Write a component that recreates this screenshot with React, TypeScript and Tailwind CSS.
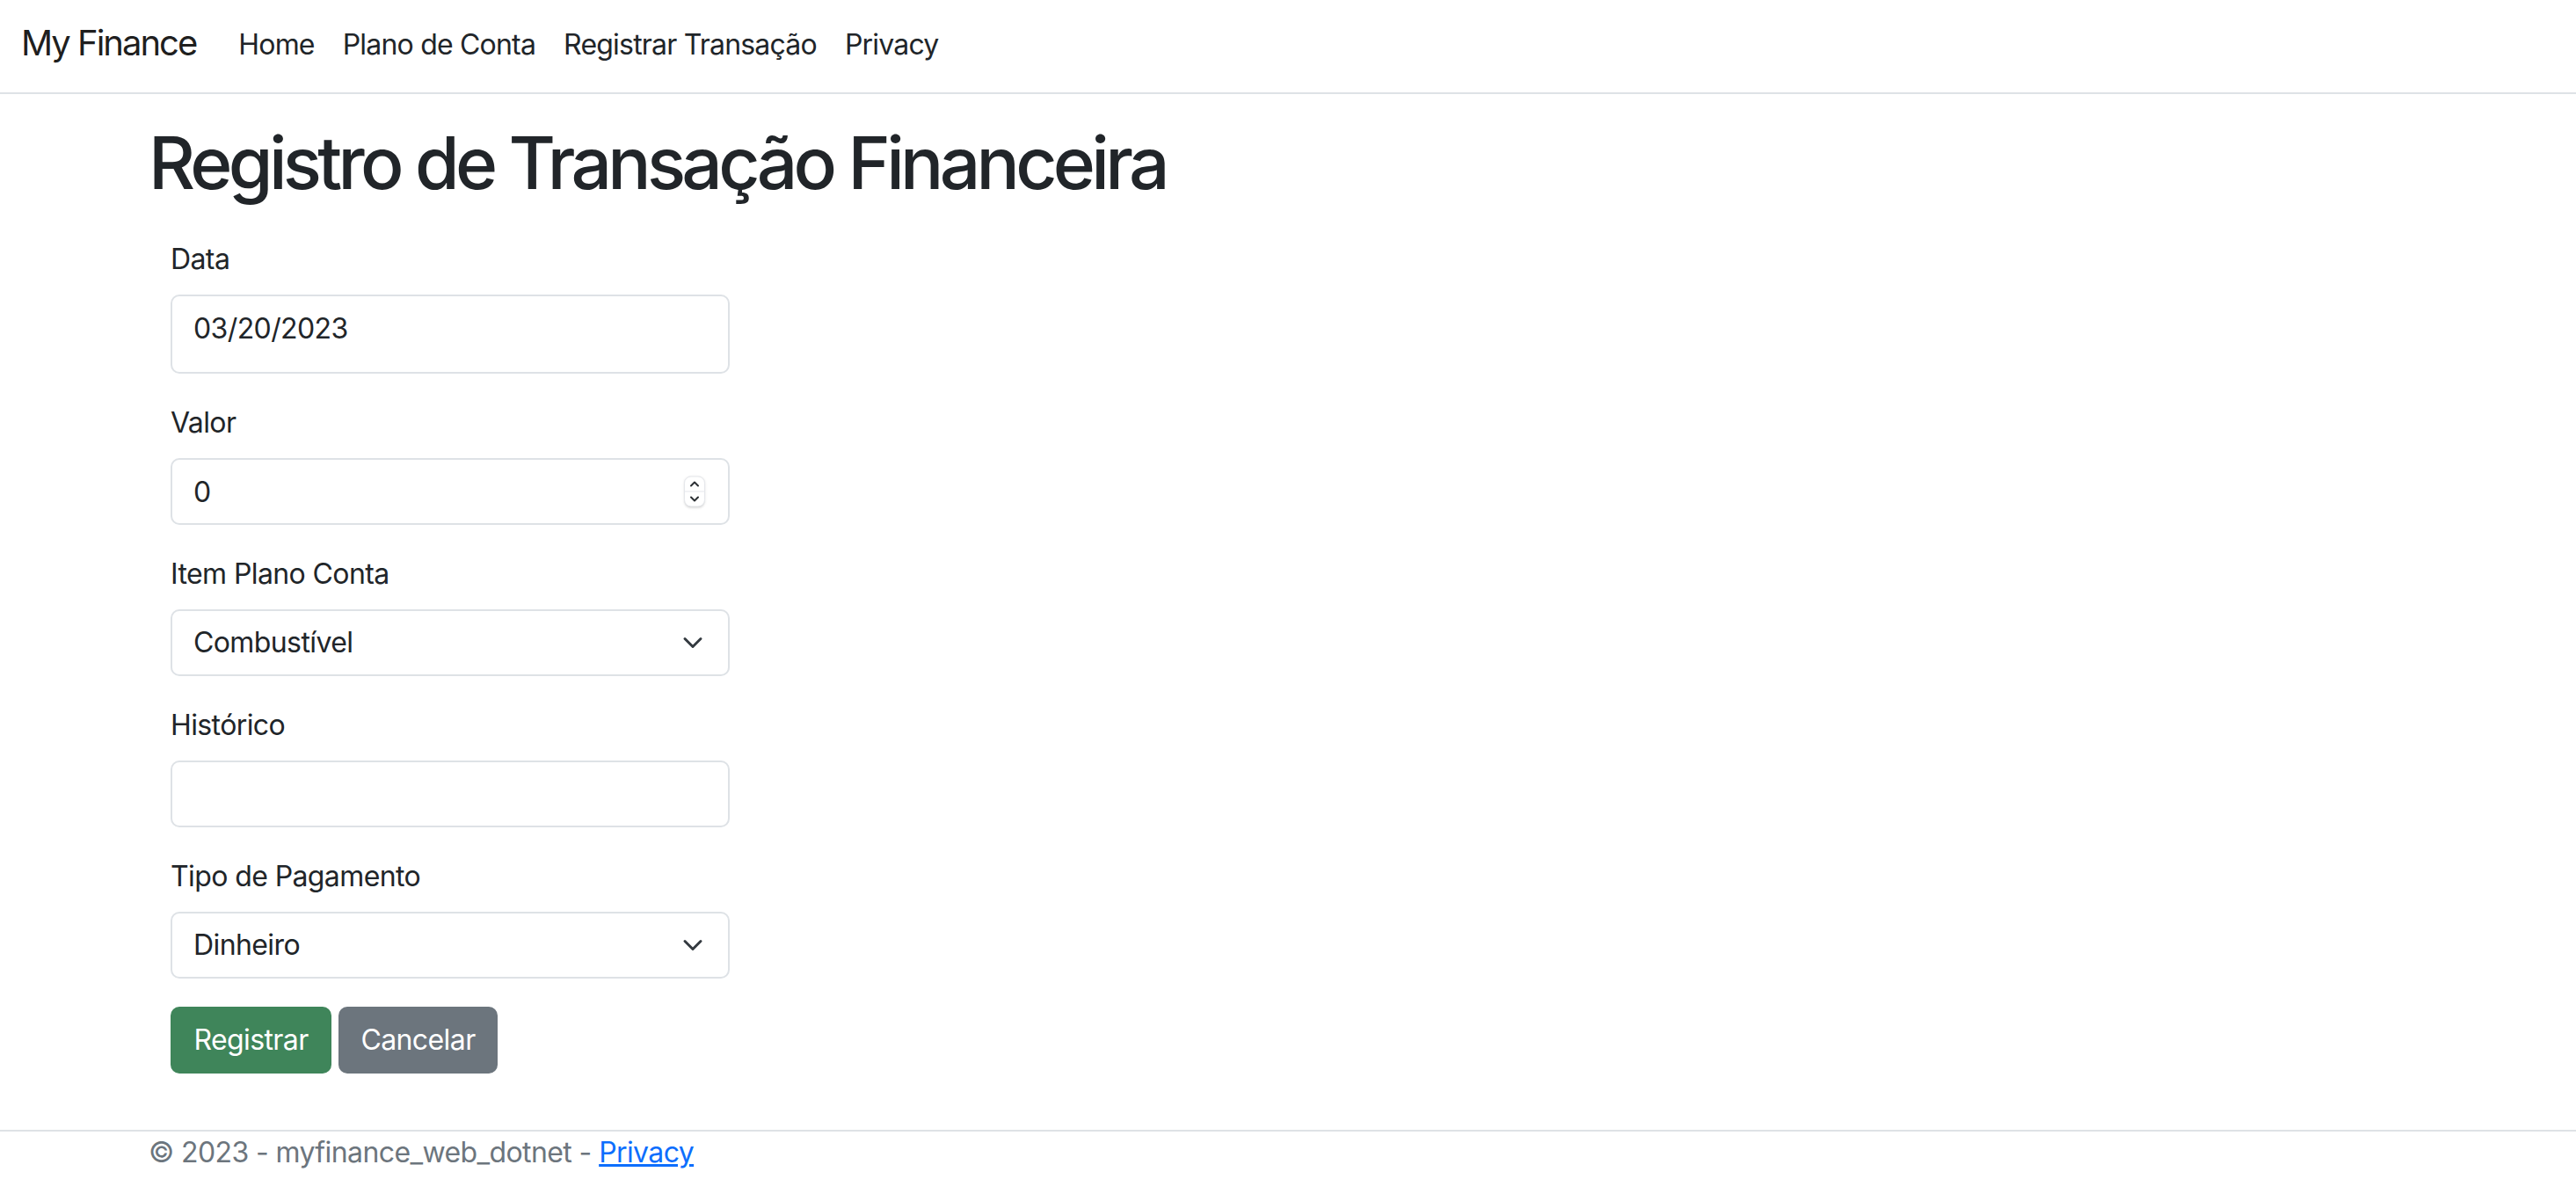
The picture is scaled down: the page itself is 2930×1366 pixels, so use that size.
import { useState } from 'react';

const FONT = { fontFamily: 'Inter, "Noto Sans", "Liberation Sans", sans-serif' };

const navLinks = ['Home', 'Plano de Conta', 'Registrar Transação', 'Privacy'];

function Chevron() {
  return (
    <svg className="pointer-events-none absolute right-[30px] top-1/2 h-[24px] w-[24px] -translate-y-1/2" viewBox="0 0 16 16" fill="none">
      <path d="m2 5 6 6 6-6" stroke="#343a40" strokeWidth="2" strokeLinecap="round" strokeLinejoin="round" />
    </svg>
  );
}

function Spinner() {
  return (
    <div className="pointer-events-none absolute right-[28px] top-1/2 flex h-[35px] w-[24px] -translate-y-1/2 flex-col overflow-hidden rounded-[8px] border border-[#e5e7eb] bg-white shadow-sm">
      <div className="flex flex-1 items-center justify-center border-b border-[#e5e7eb]">
        <svg width="12" height="8" viewBox="0 0 12 8" fill="none">
          <path d="M2 6 6 2l4 4" stroke="#2b2f33" strokeWidth="2" strokeLinecap="round" strokeLinejoin="round" />
        </svg>
      </div>
      <div className="flex flex-1 items-center justify-center">
        <svg width="12" height="8" viewBox="0 0 12 8" fill="none">
          <path d="M2 2l4 4 4-4" stroke="#2b2f33" strokeWidth="2" strokeLinecap="round" strokeLinejoin="round" />
        </svg>
      </div>
    </div>
  );
}

export default function App() {
  const [data, setData] = useState('03/20/2023');
  const [valor, setValor] = useState('0');
  const [item, setItem] = useState('Combustível');
  const [historico, setHistorico] = useState('');
  const [tipo, setTipo] = useState('Dinheiro');

  const inputCls =
    'block w-full rounded-[10px] border-2 border-[#dee2e6] bg-white px-[24px] text-[32px] tracking-[-0.6px] text-[#212529] outline-none';

  return (
    <div className="min-h-screen bg-white tracking-[-0.6px] text-[#212529]" style={FONT}>
      {/* Navbar */}
      <header className="flex h-[107px] items-start border-b-2 border-[#dee2e6] px-[24px]">
        <a className="mr-[32px] pt-[19px] text-[40px] leading-[60px] tracking-[-2px] text-[#000000e6]">My Finance</a>
        <nav className="flex pt-[27px]">
          {navLinks.map((l) => (
            <a key={l} className="px-[16px] text-[32px] leading-[48px] tracking-[-0.8px] text-[#212529]">
              {l}
            </a>
          ))}
        </nav>
      </header>

      {/* Main */}
      <main className="px-[169px] pt-[26px]">
        <h1 className="mb-[33px] text-[82px] font-medium leading-[105px] tracking-[-4.7px]">
          Registro de Transação Financeira
        </h1>

        <form className="ml-[25px] w-[636px]" onSubmit={(e) => e.preventDefault()}>
          <div className="mb-[32px]">
            <label className="mb-[16px] block text-[32px] leading-[48px]">Data</label>
            <input className={`${inputCls} h-[90px] pb-[14px]`} value={data} onChange={(e) => setData(e.target.value)} />
          </div>

          <div className="mb-[32px]">
            <label className="mb-[16px] block text-[32px] leading-[48px]">Valor</label>
            <div className="relative">
              <input className={`${inputCls} h-[76px]`} value={valor} onChange={(e) => setValor(e.target.value)} />
              <Spinner />
            </div>
          </div>

          <div className="mb-[32px]">
            <label className="mb-[16px] block text-[32px] leading-[48px]">Item Plano Conta</label>
            <div className="relative">
              <select className={`${inputCls} h-[76px] appearance-none`} value={item} onChange={(e) => setItem(e.target.value)}>
                <option>Combustível</option>
                <option>Alimentação</option>
                <option>Salário</option>
              </select>
              <Chevron />
            </div>
          </div>

          <div className="mb-[32px]">
            <label className="mb-[16px] block text-[32px] leading-[48px]">Histórico</label>
            <input className={`${inputCls} h-[76px]`} value={historico} onChange={(e) => setHistorico(e.target.value)} />
          </div>

          <div className="mb-[32px]">
            <label className="mb-[16px] block text-[32px] leading-[48px]">Tipo de Pagamento</label>
            <div className="relative">
              <select className={`${inputCls} h-[76px] appearance-none`} value={tipo} onChange={(e) => setTipo(e.target.value)}>
                <option>Dinheiro</option>
                <option>Cartão</option>
              </select>
              <Chevron />
            </div>
          </div>

          <div className="flex gap-[8px]">
            <button type="submit" className="h-[76px] w-[183px] rounded-[10px] bg-[#3f855a] text-[32px] tracking-[-0.6px] text-white">
              Registrar
            </button>
            <button type="button" className="h-[76px] w-[181px] rounded-[10px] bg-[#6c757d] text-[32px] tracking-[-0.6px] text-white">
              Cancelar
            </button>
          </div>
        </form>
      </main>

      {/* Footer */}
      <footer className="mt-[64px] border-t-2 border-[#dee2e6] px-[169px] text-[32px] leading-[48px] text-[#6c757d]">
        © 2023 - myfinance_web_dotnet - <a className="text-[#0d6efd] underline">Privacy</a>
      </footer>
    </div>
  );
}
